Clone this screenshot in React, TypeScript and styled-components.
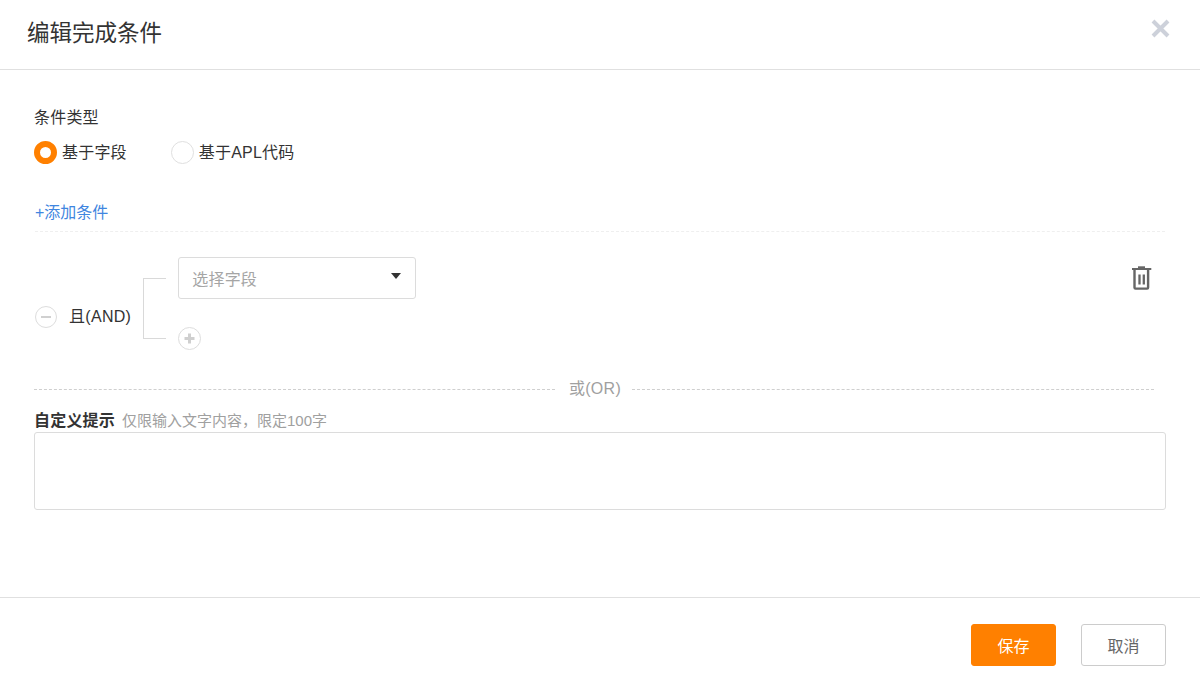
import React from 'react';
import styled, { createGlobalStyle } from 'styled-components';

const GlobalStyle = createGlobalStyle`
  html, body {
    margin: 0;
    padding: 0;
    background: #fff;
    font-family: "Liberation Sans", "Noto Sans CJK SC", sans-serif;
    color: #333;
  }
`;

const Dialog = styled.div`
  width: 1200px;
  height: 688px;
  display: flex;
  flex-direction: column;
  box-sizing: border-box;
`;

const Header = styled.header`
  height: 70px;
  box-sizing: border-box;
  border-bottom: 1px solid #e0e0e0;
  display: flex;
  justify-content: space-between;
  padding: 17px 29px 0 27px;
`;

const Title = styled.h1`
  margin: 0;
  font-size: 22.5px;
  line-height: 34px;
  font-weight: 400;
  color: #333;
`;

const CloseButton = styled.button`
  border: 0;
  background: none;
  padding: 0;
  width: 22px;
  height: 22px;
  cursor: pointer;
`;

const Body = styled.main`
  flex: 1;
  padding: 36px 34px 0;
`;

const FieldLabel = styled.div`
  font-size: 16px;
  line-height: 24px;
  letter-spacing: 0.2px;
  color: #333;
`;

const RadioGroup = styled.div`
  display: flex;
  gap: 44px;
  margin-top: 11px;
`;

const RadioOption = styled.label`
  display: flex;
  align-items: center;
  gap: 5px;
  font-size: 16px;
  letter-spacing: 0.2px;
  color: #333;
`;

const RadioText = styled.span`
  padding-top: 1px;
  line-height: 22px;
`;

const RadioDot = styled.span<{ $checked?: boolean }>`
  width: 23px;
  height: 23px;
  box-sizing: border-box;
  border-radius: 50%;
  border: ${(p) => (p.$checked ? '6px solid #ff8000' : '1px solid #e0e0e0')};
  background: #fff;
`;

const AddLink = styled.a`
  display: block;
  margin: 37px 0 0 1px;
  padding-bottom: 6px;
  border-bottom: 1px dashed #efefef;
  width: 1130px;
  font-size: 16px;
  line-height: 24px;
  color: #3f86e0;
`;

const RuleRow = styled.div`
  display: flex;
  justify-content: space-between;
  margin-top: 25px;
  width: 1119px;
  height: 93px;
`;

const RuleGroup = styled.div`
  display: flex;
`;

const Relation = styled.div`
  display: flex;
  align-items: center;
  height: 120px;
  gap: 12px;
  padding-left: 1px;
`;

const RelationText = styled.span`
  font-size: 16px;
  line-height: 22px;
  letter-spacing: 0.3px;
  color: #333;
`;

const RoundButton = styled.button<{ $size: number }>`
  width: ${(p) => p.$size}px;
  height: ${(p) => p.$size}px;
  box-sizing: border-box;
  padding: 0;
  border: 1px solid #ddd;
  border-radius: 50%;
  background: #fff;
  display: flex;
  align-items: center;
  justify-content: center;
  cursor: pointer;
`;

const Bracket = styled.div`
  width: 23px;
  height: 61px;
  box-sizing: border-box;
  margin: 21px 12px 0 12px;
  border: 1px solid #d9d9d9;
  border-right: 0;
`;

const Conditions = styled.div`
  display: flex;
  flex-direction: column;
  align-items: flex-start;
  gap: 28px;
`;

const SelectBox = styled.div`
  width: 238px;
  height: 42px;
  box-sizing: border-box;
  border: 1px solid #dcdcdc;
  border-radius: 3px;
  display: flex;
  align-items: center;
  justify-content: space-between;
  padding: 0 14px 1px 13px;
  font-size: 16px;
  letter-spacing: 0.2px;
  color: #a5a5a5;
`;

const Caret = styled.span`
  width: 0;
  height: 0;
  margin-bottom: 3px;
  border-left: 5.5px solid transparent;
  border-right: 5.5px solid transparent;
  border-top: 6px solid #333;
`;

const IconButton = styled.button`
  border: 0;
  background: none;
  padding: 0;
  width: 24px;
  height: 26px;
  margin-top: 8px;
  cursor: pointer;
`;

const OrDivider = styled.div`
  display: flex;
  align-items: center;
  gap: 11px;
  width: 1120px;
  margin-top: 28px;
  font-size: 16px;
  line-height: 22px;
  color: #a0a0a0;
`;

const DividerLine = styled.span<{ $width: number }>`
  width: ${(p) => p.$width}px;
  border-top: 1px dashed #cfcfcf;
`;

const OrText = styled.span`
  margin-left: 3px;
  letter-spacing: 0.3px;
`;

const TipRow = styled.div`
  display: flex;
  align-items: baseline;
  gap: 7px;
  margin-top: 10px;
  line-height: 22px;
`;

const TipLabel = styled.span`
  font-size: 16px;
  font-weight: 700;
  letter-spacing: 0.2px;
  color: #333;
`;

const TipHint = styled.span`
  font-size: 15px;
  color: #a0a0a0;
`;

const TipInput = styled.textarea`
  display: block;
  width: 1132px;
  height: 78px;
  box-sizing: border-box;
  border: 1px solid #dcdcdc;
  border-radius: 3px;
  outline: 0;
  resize: none;
`;

const Footer = styled.footer`
  height: 91px;
  box-sizing: border-box;
  border-top: 1px solid #e0e0e0;
  display: flex;
  justify-content: flex-end;
  gap: 25px;
  padding: 26px 34px 0 0;
`;

const Button = styled.button<{ $primary?: boolean }>`
  width: 85px;
  height: 42px;
  box-sizing: border-box;
  border-radius: 3px;
  border: 1px solid ${(p) => (p.$primary ? '#ff8000' : '#ccc')};
  background: ${(p) => (p.$primary ? '#ff8000' : '#fff')};
  color: ${(p) => (p.$primary ? '#fff' : '#666')};
  font-family: inherit;
  font-size: 16px;
  cursor: pointer;
`;

const App = () => {
  return (
    <Dialog>
      <GlobalStyle />
      <Header>
        <Title>编辑完成条件</Title>
        <CloseButton aria-label="关闭">
          <svg width="22" height="22" viewBox="0 0 22 22">
            <path d="M4 4 19 19M19 4 4 19" stroke="#cdd1da" strokeWidth="4" />
          </svg>
        </CloseButton>
      </Header>
      <Body>
        <FieldLabel>条件类型</FieldLabel>
        <RadioGroup>
          <RadioOption>
            <RadioDot $checked />
            <RadioText>基于字段</RadioText>
          </RadioOption>
          <RadioOption>
            <RadioDot />
            <RadioText>基于APL代码</RadioText>
          </RadioOption>
        </RadioGroup>
        <AddLink>+添加条件</AddLink>
        <RuleRow>
          <RuleGroup>
            <Relation>
              <RoundButton $size={22} aria-label="移除">
                <svg width="12" height="12" viewBox="0 0 12 12">
                  <path d="M1 6H11" stroke="#d0d0d0" strokeWidth="2" />
                </svg>
              </RoundButton>
              <RelationText>且(AND)</RelationText>
            </Relation>
            <Bracket />
            <Conditions>
              <SelectBox>
                选择字段
                <Caret />
              </SelectBox>
              <RoundButton $size={23} aria-label="添加">
                <svg width="11" height="11" viewBox="0 0 11 11">
                  <path d="M5.5 0.5V10.5M0.5 5.5H10.5" stroke="#cfcfcf" strokeWidth="3" />
                </svg>
              </RoundButton>
            </Conditions>
          </RuleGroup>
          <IconButton aria-label="删除">
            <svg width="24" height="26" viewBox="0 0 24 26">
              <path d="M3 4H22.3" stroke="#666" strokeWidth="2" />
              <path d="M9 2.2H16" stroke="#666" strokeWidth="1.8" />
              <path d="M5.5 5V22.6A1 1 0 0 0 6.5 23.6H18.1A1 1 0 0 0 19.1 22.6V5" fill="none" stroke="#666" strokeWidth="2.4" />
              <path d="M10.5 9.5V19.5M14.8 9.5V19.5" stroke="#666" strokeWidth="2.3" />
            </svg>
          </IconButton>
        </RuleRow>
        <OrDivider>
          <DividerLine $width={521} />
          <OrText>或(OR)</OrText>
          <DividerLine $width={522} />
        </OrDivider>
        <TipRow>
          <TipLabel>自定义提示</TipLabel>
          <TipHint>仅限输入文字内容，限定100字</TipHint>
        </TipRow>
        <TipInput />
      </Body>
      <Footer>
        <Button $primary>保存</Button>
        <Button>取消</Button>
      </Footer>
    </Dialog>
  );
};

export default App;
